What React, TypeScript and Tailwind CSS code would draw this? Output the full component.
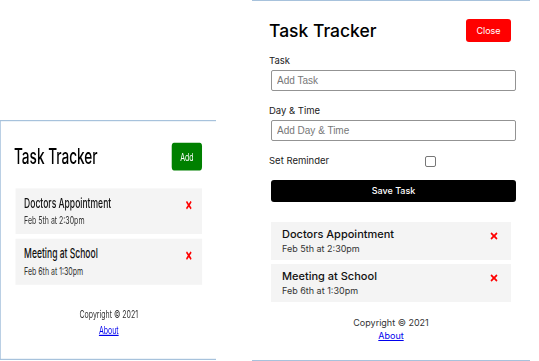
import { FaTimes } from "react-icons/fa";

const TASKS = [
  { id: 1, text: "Doctors Appointment", day: "Feb 5th at 2:30pm" },
  { id: 2, text: "Meeting at School", day: "Feb 6th at 1:30pm" }
];

function AddTaskForm() {
  return (
    <form className="mt-[12px] flex flex-col">
      <label className="-ml-[2px] text-[9.5px] leading-[13px] text-[#222]">Task</label>
      <input
        type="text"
        placeholder="Add Task"
        className="mt-[3px] h-[21px] w-[245px] rounded-[2px] border border-[#939393] px-[5px] text-[10px] font-['Liberation_Sans',sans-serif] placeholder:text-[#777] outline-none"
      />
      <label className="-ml-[2px] mt-[13px] text-[9.5px] leading-[13px] text-[#222]">Day &amp; Time</label>
      <input
        type="text"
        placeholder="Add Day & Time"
        className="mt-[3px] h-[21px] w-[245px] rounded-[2px] border border-[#939393] px-[5px] text-[10px] font-['Liberation_Sans',sans-serif] placeholder:text-[#777] outline-none"
      />
      <div className="-ml-[2px] mt-[14px] flex h-[12px] items-center">
        <label className="w-[156px] text-[9.5px] leading-[12px] text-[#222]">Set Reminder</label>
        <span className="block size-[11px] rounded-[2px] border border-[#777] bg-white" />
      </div>
      <button
        type="button"
        className="mt-[13px] h-[22px] w-[245px] rounded-[3px] bg-black text-[9px] font-medium text-white"
      >
        Save Task
      </button>
    </form>
  );
}

function TaskItem({ text, day }: { text: string; day: string }) {
  return (
    <div className="flex h-[38px] items-start justify-between bg-[#f4f4f4] pl-[11px] pr-[12px] pt-[6px]">
      <div>
        <h3 className="text-[11px] font-medium leading-[13px] text-[#111]">{text}</h3>
        <p className="mt-[1px] text-[9px] leading-[13px] text-[#333]">{day}</p>
      </div>
      <FaTimes className="mt-[3px] text-[#ff0000]" size={10} />
    </div>
  );
}

function Tracker({ showForm }: { showForm: boolean }) {
  return (
    <div className="flex w-[278px] flex-col px-[19px] pt-[18px] pb-[18px] font-['Inter',sans-serif]">
      <header className="flex h-[23px] items-center justify-between">
        <h1 className="-ml-[2px] text-[17.5px] font-medium leading-[23px] text-black">Task Tracker</h1>
        {showForm ? (
          <button type="button" className="h-[23px] w-[45px] rounded-[3px] bg-[#ff0000] text-[9px] text-white">
            Close
          </button>
        ) : (
          <button type="button" className="h-[23px] w-[39px] rounded-[3px] bg-[#008000] text-[9px] text-white">
            Add
          </button>
        )}
      </header>
      {showForm ? <AddTaskForm /> : null}
      <div className={showForm ? "mt-[20px] flex flex-col gap-[4px]" : "mt-[15px] flex flex-col gap-[4px]"}>
        {TASKS.map((t) => (
          <TaskItem key={t.id} text={t.text} day={t.day} />
        ))}
      </div>
      <footer
        className={
          showForm
            ? "mt-[14px] text-center text-[9px] leading-[13px] text-[#333]"
            : "mt-[18px] text-center text-[9px] leading-[13px] text-[#333]"
        }
      >
        <p>Copyright &copy; 2021</p>
        <a href="#" className="text-[#0000ee] underline">
          About
        </a>
      </footer>
    </div>
  );
}

export default function App() {
  return (
    <div className="flex h-[361px] w-[539px] items-start bg-white">
      <div className="mt-[120px] h-[238px] w-[216px] shrink-0">
        <div className="w-[278px] origin-top-left scale-x-[0.777] scale-y-[1.2] border-y border-l border-[#a7c2dc]">
          <Tracker showForm={false} />
        </div>
      </div>
      <div className="ml-[36px] w-[278px] shrink-0 border-y border-[#a7c2dc]">
        <Tracker showForm />
      </div>
    </div>
  );
}
